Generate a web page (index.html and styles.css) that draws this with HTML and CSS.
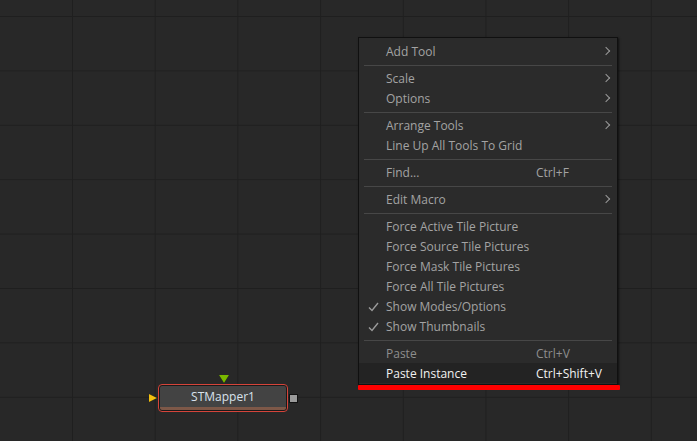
FILE: index.html
```html
<!DOCTYPE html>
<html>
<head>
<meta charset="utf-8">
<link rel="stylesheet" href="styles.css">
</head>
<body>
<div class="canvas">
  <div class="node">
    <span class="in-top"></span>
    <span class="in-left"></span>
    <span class="out"></span>
    <div class="node-body"><span class="node-label">STMapper1</span></div>
  </div>

  <div class="menu">
    <div class="item"><span class="label">Add Tool</span><span class="arrow"></span></div>
    <div class="sep"></div>
    <div class="item"><span class="label">Scale</span><span class="arrow"></span></div>
    <div class="item"><span class="label">Options</span><span class="arrow"></span></div>
    <div class="sep"></div>
    <div class="item"><span class="label">Arrange Tools</span><span class="arrow"></span></div>
    <div class="item"><span class="label">Line Up All Tools To Grid</span></div>
    <div class="sep"></div>
    <div class="item"><span class="label">Find...</span><span class="key">Ctrl+F</span></div>
    <div class="sep"></div>
    <div class="item"><span class="label">Edit Macro</span><span class="arrow"></span></div>
    <div class="sep"></div>
    <div class="item"><span class="label">Force Active Tile Picture</span></div>
    <div class="item"><span class="label">Force Source Tile Pictures</span></div>
    <div class="item"><span class="label">Force Mask Tile Pictures</span></div>
    <div class="item"><span class="label">Force All Tile Pictures</span></div>
    <div class="item"><span class="check"><svg width="11" height="10" viewBox="0 0 11 10"><path d="M1 5.5 L4 8.5 L10 1" fill="none" stroke="#9a9a9a" stroke-width="1.4"/></svg></span><span class="label">Show Modes/Options</span></div>
    <div class="item"><span class="check"><svg width="11" height="10" viewBox="0 0 11 10"><path d="M1 5.5 L4 8.5 L10 1" fill="none" stroke="#9a9a9a" stroke-width="1.4"/></svg></span><span class="label">Show Thumbnails</span></div>
    <div class="sep"></div>
    <div class="item dim"><span class="label">Paste</span><span class="key">Ctrl+V</span></div>
    <div class="item active"><span class="label">Paste Instance</span><span class="key">Ctrl+Shift+V</span></div>
  </div>
  <div class="underline"></div>
</div>
</body>
</html>
```
FILE: styles.css
```css
html, body {
  margin: 0;
  padding: 0;
  width: 697px;
  height: 441px;
  overflow: hidden;
}
.canvas {
  position: relative;
  width: 697px;
  height: 441px;
  background-color: #282828;
  background-image:
    linear-gradient(to right, #1f1f1f 0, #1f1f1f 1px, transparent 1px),
    linear-gradient(to bottom, #1f1f1f 0, #1f1f1f 1px, transparent 1px);
  background-size: 82.7px 100%, 100% 54.4px;
  background-position: 72px 0, 0 16px;
  font-family: "Open Sans", "Noto Sans", sans-serif;
}

/* context menu */
.menu {
  position: absolute;
  left: 358px;
  top: 37px;
  width: 258px;
  padding: 3px 0 1px;
  background: #2b2b2b;
  border: 1px solid #101010;
  box-shadow: 1px 1px 2px rgba(0,0,0,0.6);
  font-size: 12px;
  color: #a3a3a3;
}
.item {
  position: relative;
  box-sizing: border-box;
  display: flex;
  align-items: flex-start;
  height: 20px;
  padding-top: 2px;
  line-height: 18px;
  padding-left: 27px;
}
.item .label { flex: 1; }
.item .key {
  width: 81px;
}
.item .arrow {
  position: absolute;
  right: 8px;
  top: 7px;
  width: 5px;
  height: 5px;
  border-right: 1px solid #9a9a9a;
  border-top: 1px solid #9a9a9a;
  transform: rotate(45deg);
}
.item .check {
  position: absolute;
  left: 9px;
  top: 6px;
  width: 11px;
  height: 10px;
  display: flex;
}
.item.dim { color: #8e8e8e; }
.item.active {
  background: #232323;
  color: #f2f2f2;
}
.sep {
  height: 1px;
  margin: 4px 5px 2px;
  background: #474747;
}
.underline {
  position: absolute;
  left: 358px;
  top: 385px;
  width: 262px;
  height: 5px;
  background: #ff0000;
  border-radius: 1px;
}

/* node */
.node {
  position: absolute;
  left: 158px;
  top: 384px;
  width: 130px;
  height: 28px;
}
.node-body {
  box-sizing: border-box;
  width: 130px;
  height: 28px;
  border: 1px solid #d5443a;
  border-radius: 4px;
  background: #1a1a1a;
  padding: 1px;
  display: flex;
}
.node-label {
  flex: 1;
  display: flex;
  align-items: center;
  justify-content: center;
  background: #434343;
  border-bottom: 3px solid #7d5848;
  border-radius: 2px;
  font-size: 12px;
  color: #d9e2ec;
}
.in-top {
  position: absolute;
  left: 61px;
  top: -9px;
  width: 0;
  height: 0;
  border-left: 5px solid transparent;
  border-right: 5px solid transparent;
  border-top: 8px solid #7ab800;
  filter: drop-shadow(0 0 0.6px #000);
}
.in-left {
  position: absolute;
  left: -9px;
  top: 10px;
  width: 0;
  height: 0;
  border-top: 4.5px solid transparent;
  border-bottom: 4.5px solid transparent;
  border-left: 8px solid #f2c010;
  filter: drop-shadow(0 0 0.6px #000);
}
.out {
  position: absolute;
  left: 131px;
  top: 10px;
  width: 7px;
  height: 7px;
  background: #9a9a9a;
  border: 1px solid #111;
}
```
